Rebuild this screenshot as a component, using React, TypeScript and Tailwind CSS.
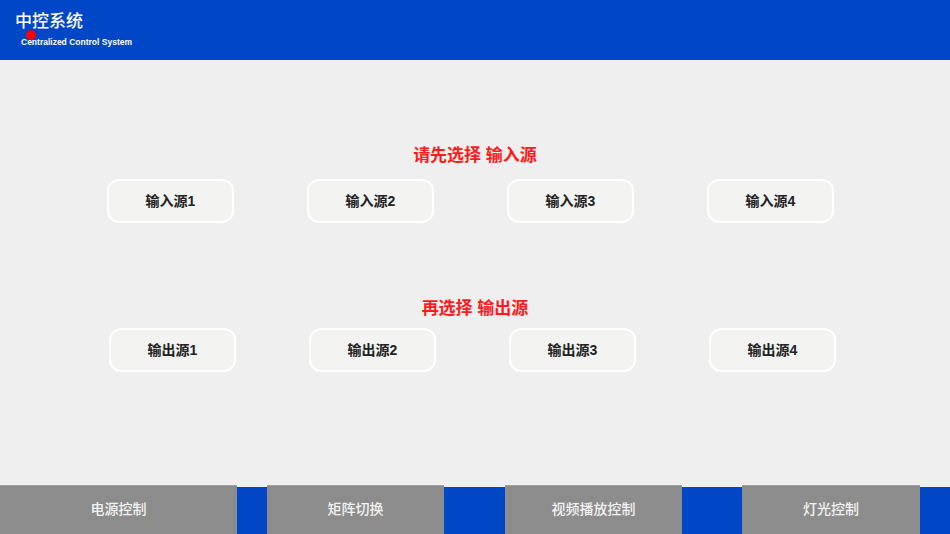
import React from "react";

const font = { fontFamily: '"Liberation Sans", "Noto Sans CJK SC", sans-serif' };

function SrcButton({ label }: { label: string }) {
  return (
    <div className="w-[127px] h-[44px] rounded-[12px] border-2 border-white bg-[#f3f3f2] flex items-center justify-center text-[14px] font-bold text-[#222]">
      {label}
    </div>
  );
}

export default function App() {
  const inputs = ["输入源1", "输入源2", "输入源3", "输入源4"];
  const outputs = ["输出源1", "输出源2", "输出源3", "输出源4"];
  return (
    <div className="w-[950px] h-[534px] bg-[#efefef] flex flex-col overflow-hidden" style={font}>
      <div className="h-[60px] bg-[#0047c8] relative shrink-0">
        <div className="pl-[15px] pt-[11px] text-white text-[17px] font-medium leading-[22px]">中控系统</div>
        <div className="pl-[21px] pt-[4px] text-white text-[8.5px] font-bold leading-[10px]">
          Centralized Control System
        </div>
        <div className="absolute left-[26px] top-[30px] w-[10px] h-[10px] rounded-full bg-[#ff0000]" />
      </div>
      <div className="flex-1 flex flex-col">
        <div className="mt-[84px] text-center text-[17px] font-bold text-[#ff1a1a] leading-[24px]">请先选择 输入源</div>
        <div className="mt-[11px] ml-[107px] flex gap-[73px]">
          {inputs.map((l) => (
            <SrcButton key={l} label={l} />
          ))}
        </div>
        <div className="mt-[74px] text-center text-[17px] font-bold text-[#ff1a1a] leading-[24px]">再选择 输出源</div>
        <div className="mt-[7px] ml-[109px] flex gap-[73px]">
          {outputs.map((l) => (
            <SrcButton key={l} label={l} />
          ))}
        </div>
      </div>
      <div className="h-[49px] shrink-0 relative flex items-end">
        <div className="absolute left-0 right-0 bottom-0 h-[47px] bg-[#0047c8]" />
        <div className="relative flex w-full h-[49px]">
          <div className="w-[237px] h-full bg-[#8c8c8c] border-t border-[#a0a0a0] flex items-center justify-center pb-[2px] text-[14px] font-medium text-[#f2f2f2]">电源控制</div>
          <div className="w-[30px]" />
          <div className="w-[177px] h-full bg-[#8c8c8c] border-t border-[#a0a0a0] flex items-center justify-center pb-[2px] text-[14px] font-medium text-[#f2f2f2]">矩阵切换</div>
          <div className="w-[61px]" />
          <div className="w-[177px] h-full bg-[#8c8c8c] border-t border-[#a0a0a0] flex items-center justify-center pb-[2px] text-[14px] font-medium text-[#f2f2f2]">视频播放控制</div>
          <div className="w-[60px]" />
          <div className="w-[178px] h-full bg-[#8c8c8c] border-t border-[#a0a0a0] flex items-center justify-center pb-[2px] text-[14px] font-medium text-[#f2f2f2]">灯光控制</div>
        </div>
      </div>
    </div>
  );
}
